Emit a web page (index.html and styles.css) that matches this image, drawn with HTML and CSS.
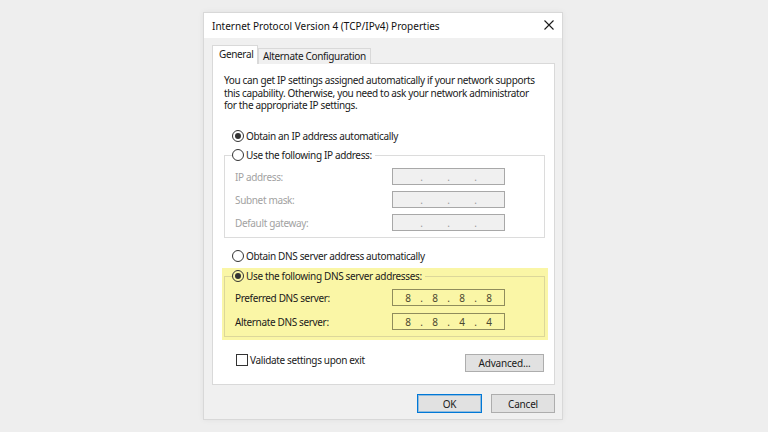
FILE: index.html
```html
<!DOCTYPE html>
<html>
<head>
  <title>Internet Protocol Version 4 (TCP/IPv4) Properties</title>
  <link rel="stylesheet" href="styles.css">
</head>
<body>
  <div class="dialog">
    <div class="titlebar">
      <span class="title">Internet Protocol Version 4 (TCP/IPv4) Properties</span>
      <svg class="close" width="10" height="10" viewBox="0 0 10 10">
        <path d="M0.5 0.5 L9.5 9.5 M9.5 0.5 L0.5 9.5" stroke="#1a1a1a" stroke-width="1.1" fill="none"/>
      </svg>
    </div>

    <div class="body">
      <div class="tabs">
        <div class="tab active">General</div>
        <div class="tab">Alternate Configuration</div>
      </div>

      <div class="panel">
        <p class="intro">You can get IP settings assigned automatically if your network supports<br>this capability. Otherwise, you need to ask your network administrator<br>for the appropriate IP settings.</p>

        <div class="option first"><span class="radio checked"></span>Obtain an IP address automatically</div>

        <div class="group">
          <div class="option legend"><span class="radio"></span>Use the following IP address:</div>
          <div class="field disabled"><span class="label">IP address:</span><span class="ip"><i></i><b>.</b><i></i><b>.</b><i></i><b>.</b><i></i></span></div>
          <div class="field disabled"><span class="label">Subnet mask:</span><span class="ip"><i></i><b>.</b><i></i><b>.</b><i></i><b>.</b><i></i></span></div>
          <div class="field disabled"><span class="label">Default gateway:</span><span class="ip"><i></i><b>.</b><i></i><b>.</b><i></i><b>.</b><i></i></span></div>
        </div>

        <div class="option dns-auto"><span class="radio"></span>Obtain DNS server address automatically</div>

        <div class="highlight">
          <div class="group">
            <div class="option legend"><span class="radio checked"></span>Use the following DNS server addresses:</div>
            <div class="field"><span class="label">Preferred DNS server:</span><span class="ip"><i>8</i><b>.</b><i>8</i><b>.</b><i>8</i><b>.</b><i>8</i></span></div>
            <div class="field second"><span class="label">Alternate DNS server:</span><span class="ip"><i>8</i><b>.</b><i>8</i><b>.</b><i>4</i><b>.</b><i>4</i></span></div>
          </div>
        </div>

        <div class="bottom-row">
          <div class="check"><span class="box"></span>Validate settings upon exit</div>
          <button class="btn advanced">Advanced...</button>
        </div>
      </div>

      <div class="footer">
        <button class="btn ok">OK</button>
        <button class="btn cancel">Cancel</button>
      </div>
    </div>
  </div>
</body>
</html>
```

FILE: styles.css
```css
* {
  box-sizing: border-box;
}

body {
  margin: 0;
  width: 768px;
  height: 432px;
  overflow: hidden;
  background-color: #eeeeee;
  color: #1a1a1a;
  font-family: "Noto Sans", "Open Sans", sans-serif;
  font-size: 10px;
}

.dialog {
  width: 360px;
  margin: 12px 0 0 203px;
  background: #f0f0f0;
  border: 1px solid #d8d8d8;
  box-shadow: 0 0 6px rgba(0, 0, 0, 0.06);
}

.titlebar {
  height: 25px;
  background: white;
  display: flex;
  align-items: center;
  justify-content: space-between;
  padding: 0 8px 0 8px;
}

.title {
  color: #111;
}

.close {
  display: block;
  margin-top: -1px;
}

.body {
  padding: 7px 7px 6px 8px;
  letter-spacing: -0.35px;
}

/* tab strip */
.tabs {
  display: flex;
  align-items: flex-end;
  height: 19px;
}

.tab {
  height: 16px;
  line-height: 14px;
  padding: 0 4px;
  border: 1px solid #d9d9d9;
  border-bottom: none;
  background: #f0f0f0;
  white-space: nowrap;
}

.tab.active {
  position: relative;
  z-index: 1;
  height: 19px;
  line-height: 17px;
  width: 46px;
  padding: 0 6px;
  background: white;
}

.panel {
  margin-top: -1px;
  background: white;
  border: 1px solid #d9d9d9;
  padding: 10px 9px 12px 11px;
}

.intro {
  margin: 0;
  line-height: 12.5px;
  white-space: nowrap;
}

/* radio rows */
.option {
  display: flex;
  align-items: center;
  height: 14px;
  padding-left: 8px;
  white-space: nowrap;
}

.option.first {
  margin-top: 17.5px;
}

.option.dns-auto {
  margin-top: 11px;
}

.radio {
  flex: none;
  width: 12px;
  height: 12px;
  margin-right: 2px;
  border: 1px solid #333;
  border-radius: 50%;
  display: flex;
  align-items: center;
  justify-content: center;
}

.radio.checked::after {
  content: "";
  width: 6px;
  height: 6px;
  border-radius: 50%;
  background: #333;
}

.group {
  margin-top: 12px;
  border: 1px solid #dcdcdc;
  padding: 0 39px 6px 10px;
}

.option.legend {
  width: fit-content;
  margin: -8px 0 0 -3px;
  padding: 0 3px 0 0;
  background: white;
}

.field {
  display: flex;
  align-items: center;
  height: 17px;
  margin-top: 6px;
}

.field.second {
  margin-top: 7px;
}

.label {
  width: 157px;
}

.ip {
  width: 113px;
  height: 17px;
  display: flex;
  align-items: center;
  padding-left: 5px;
  border: 1px solid #8f8c5c;
  color: #4a4830;
  letter-spacing: 0;
}

.ip i {
  width: 20px;
  font-style: normal;
  text-align: center;
}

.ip b {
  width: 7px;
  font-weight: normal;
  text-align: center;
}

.field.disabled .label {
  color: #a2a2a2;
}

.field.disabled .ip {
  background: #f0f0f0;
  border-color: #a8a8a8;
  color: #9a9a9a;
}

/* yellow marker over the DNS block */
.highlight {
  margin: 5px -3px 0 -2px;
  padding: 8px 3px 3px 2px;
  background: #faf6a6;
}

.highlight .group {
  margin-top: 0;
  border-color: #dcd79a;
}

.highlight .option.legend {
  background: #faf6a6;
}

.bottom-row {
  display: flex;
  justify-content: space-between;
  align-items: flex-start;
  margin-top: 14px;
}

.check {
  display: flex;
  align-items: center;
  height: 12px;
  padding-left: 12px;
}

.box {
  width: 12px;
  height: 12px;
  margin-right: 2px;
  border: 1px solid #333;
}

.btn {
  height: 18px;
  padding: 0;
  font-family: inherit;
  font-size: 10px;
  letter-spacing: -0.2px;
  color: #1a1a1a;
  background: #e1e1e1;
  border: 1px solid #adadad;
}

.advanced {
  width: 79px;
  margin-right: 1px;
}

.footer {
  display: flex;
  justify-content: flex-end;
  gap: 9px;
  margin-top: 9px;
}

.footer .btn {
  height: 19px;
}

.ok {
  width: 65px;
  border-color: #0078d7;
  box-shadow: inset 0 0 0 1px rgba(0, 120, 215, 0.35);
}

.cancel {
  width: 64px;
}
```
